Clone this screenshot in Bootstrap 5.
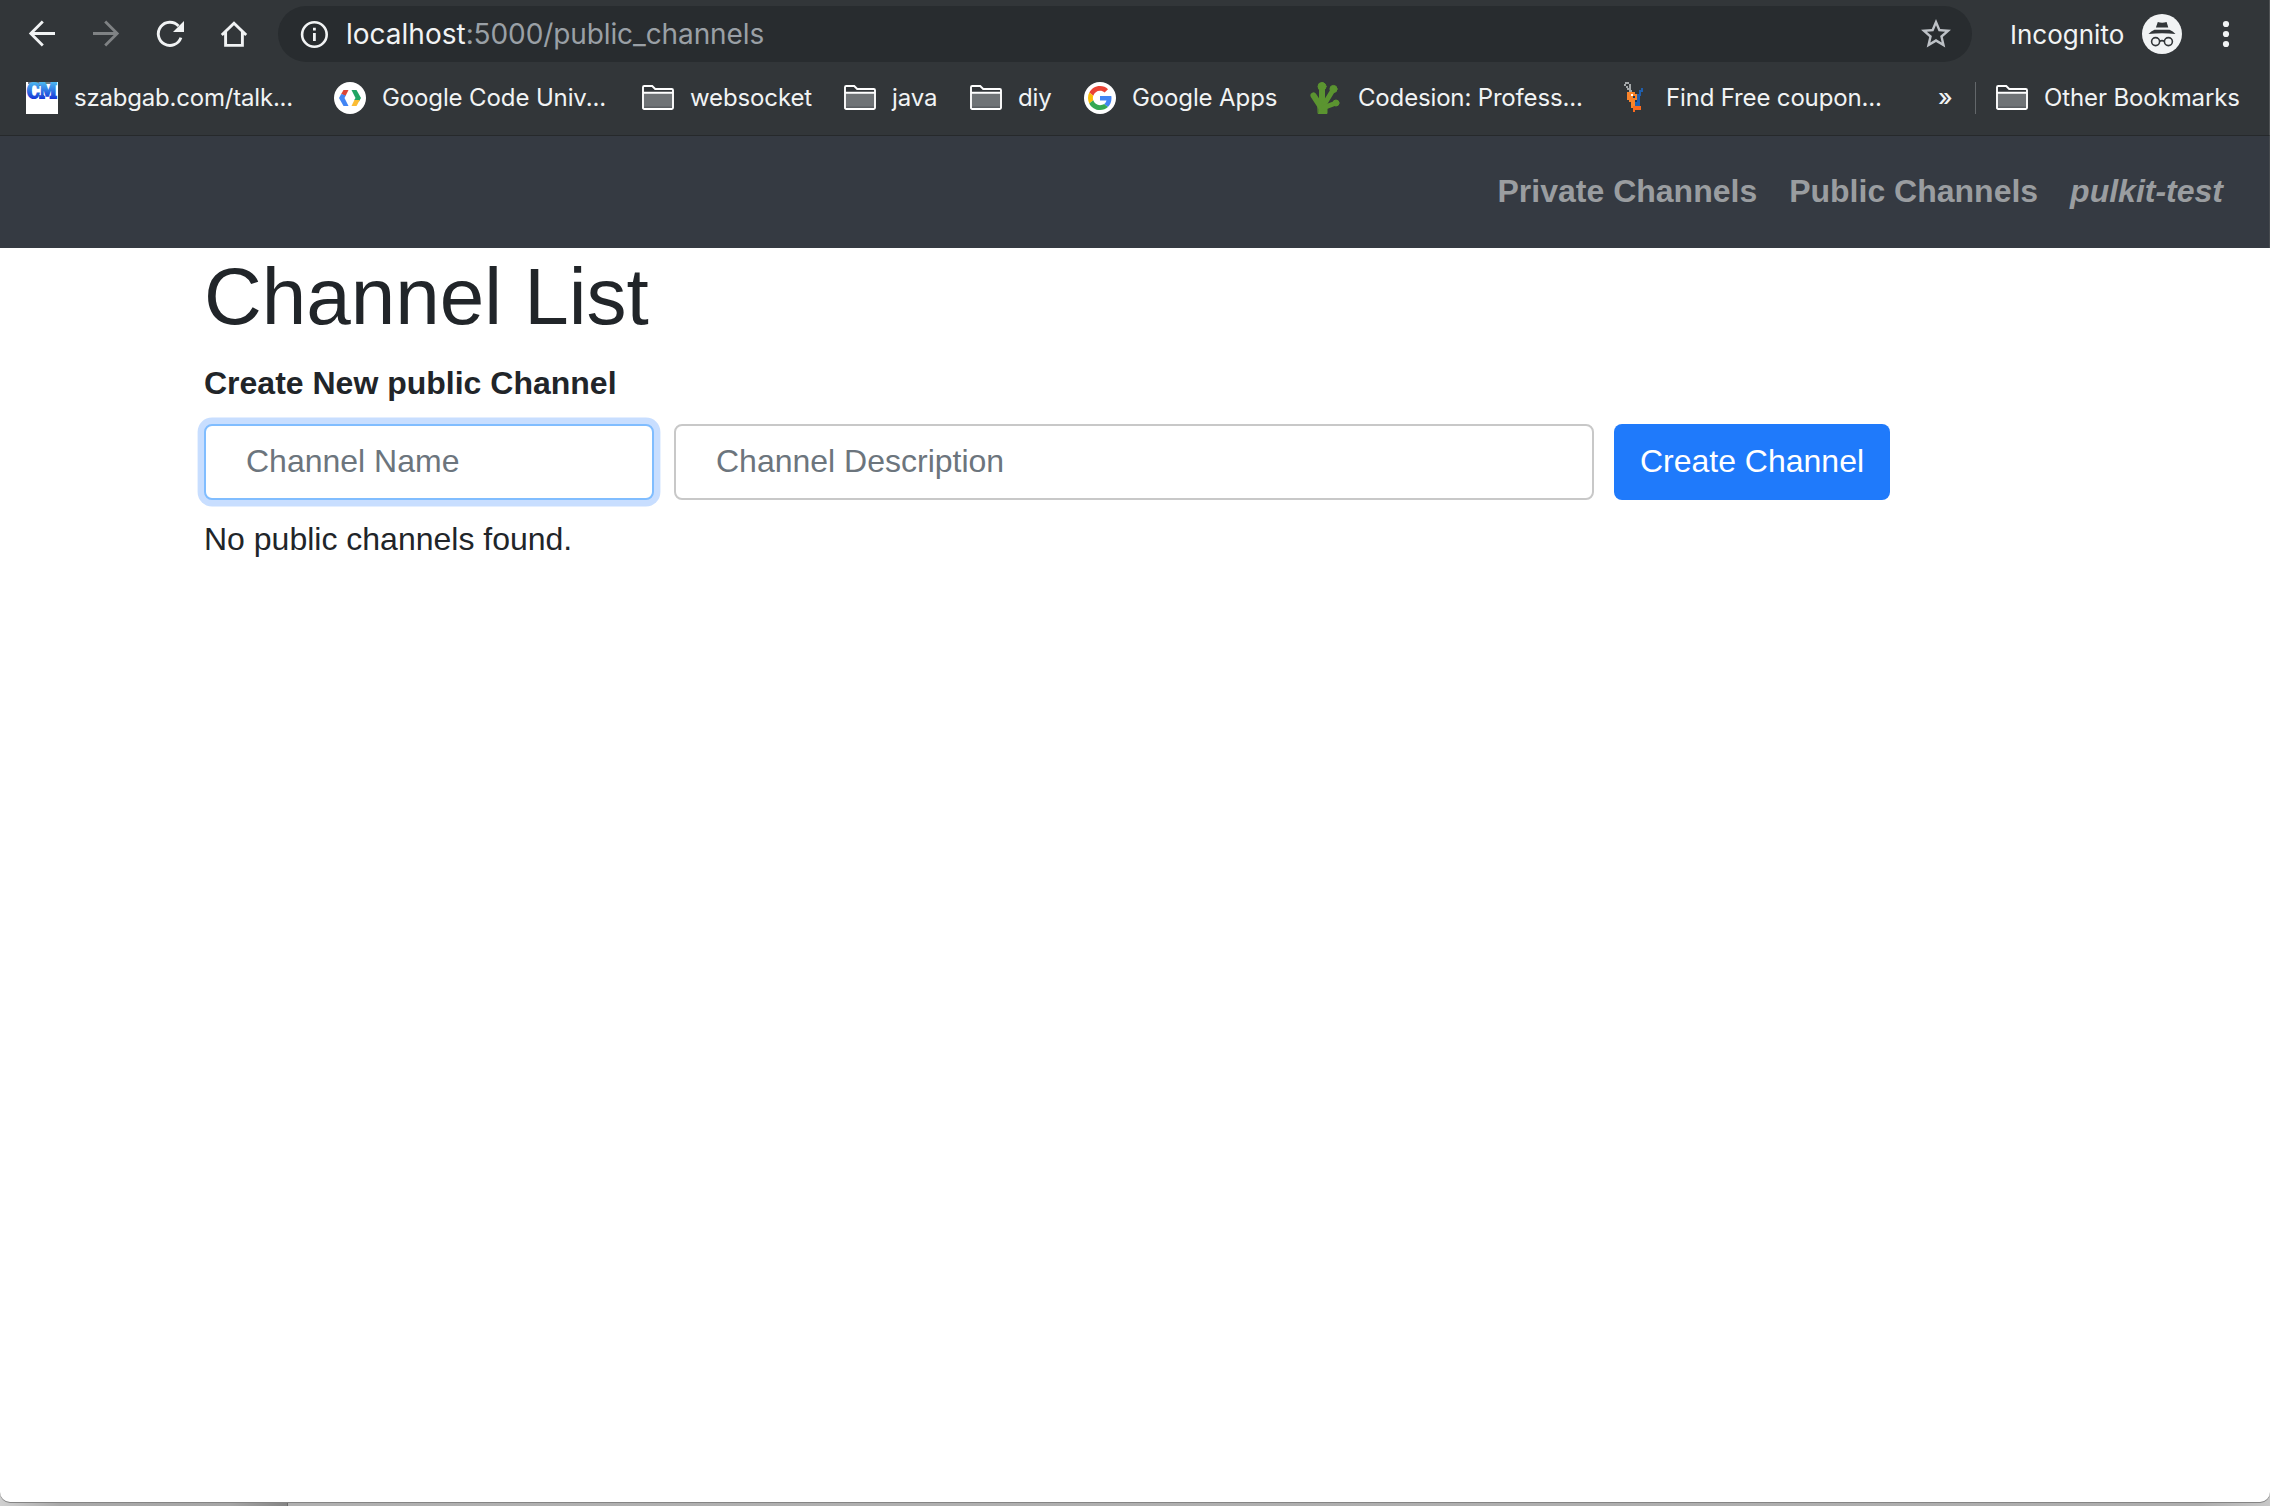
<!DOCTYPE html>
<html lang="en">
<head>
<meta charset="utf-8">
<title>Channel List</title>
<link href="https://cdn.jsdelivr.net/npm/bootstrap@5.3.0/dist/css/bootstrap.min.css" rel="stylesheet">
<script src="https://cdn.jsdelivr.net/npm/bootstrap@5.3.0/dist/js/bootstrap.bundle.min.js"></script>
<style>
body{font-family:"Liberation Sans",Arial,sans-serif;font-size:32px;line-height:48px;color:#212529;height:1506px;overflow:hidden;
  background:linear-gradient(90deg,#d0d0d0 0,#a9a9a9 60px,#a6a6a6 230px,#858585 287px,#6a6a6a 287px,#6a6a6a 288px,#b0b0b0 288px,#adadad 2200px,#c8c8c8 2270px)}
.browser-window{height:1502px;background:#fff;border-radius:0 0 10px 10px;box-shadow:0 1px 0 #858585;overflow:hidden}
.chrome-top{height:136px;background:#323639;border-bottom:1px solid #26292b;border-right:1px solid #505355;font-family:Inter,sans-serif;color:#f1f3f4}
.chrome-top svg{flex:none;display:block;overflow:visible}
.tool-row{height:68px;padding-left:26px}
.tool-icons{gap:32px}
.omnibox{margin-left:28px;width:1694px;height:56px;background:#282c2f;border-radius:28px;padding:0 18px 0 20px;font-size:28px;line-height:34px}
.omnibox .url-text{margin-left:16px}
.omnibox .url-path{color:#9aa0a6;letter-spacing:-.1px}
.incog-label{margin-left:38px;width:132px;font-size:26px;line-height:31px}
.menu-dots{margin-left:28px}
.bm-row{height:60px;font-size:24px;padding-left:26px;letter-spacing:-.12px}
.bm-item{gap:16px;flex:none;white-space:nowrap;line-height:32px}
.bm-wide{width:308px}.bm-ws{width:202px}.bm-java{width:126px}.bm-diy{width:114px}.bm-apps{width:225px}.bm-last{width:321px}
.bm-long{letter-spacing:-.2px}
.bm-shift{padding-left:1px;letter-spacing:-.16px}
.bm-more{width:37px;font-weight:500}
.bm-sep{width:1px;height:32px;background:#63676a;margin-right:20px}
.site-nav{height:112px;background:#353a42;padding:0 46px 2px;border-right:1px solid #474b50;gap:32px}
.site-nav .nav-link{color:#9a9da0;font-weight:700;padding:0}
.page-body{padding:0 204px}
.page-body h1{font-size:80px;line-height:96px;font-weight:400;margin:0 0 14px;padding-top:1px}
.create-form{gap:20px;margin-top:17px}
.create-form .form-control{height:76px;border:2px solid #c8c8c8;border-radius:8px;font-size:32px;line-height:48px;padding:11px 40px 13px;color:#495057}
.create-form .form-control::placeholder{color:#6c757d;opacity:1}
.create-form .name-field{width:450px;border-color:#80bdff;box-shadow:0 0 0 6.4px #c8deff}
.create-form .desc-field{width:920px}
.create-form .btn{width:276px;height:76px;border:0;border-radius:8px;font-size:32px;line-height:48px;padding:13px 0 15px;background:#1f7afb;white-space:nowrap}
.empty-note{margin:15px 0 0}
</style>
</head>
<body>
<svg width="0" height="0" class="position-absolute">
  <symbol id="folder" viewBox="0 0 32 32">
    <path d="M2 11H30V26H2z" fill="#6f7376"/>
    <path d="M2 24.5H30V26H2z" fill="#5b5f62"/>
    <path d="M1 25.8V5.2Q1 4 2.2 4H10.2L13.2 7H29.8Q31 7 31 8.200V25.8Q31 27 29.800 27H2.200Q1 27 1 25.800zM1 10.700H31" fill="none" stroke="#fff" stroke-width="1.900"/>
  </symbol>
</svg>
<div class="browser-window">
  <header class="chrome-top">
    <div class="tool-row d-flex align-items-center">
      <div class="tool-icons d-flex">
        <svg width="32" height="32" fill="none" stroke="#f1f3f4" stroke-width="2.800"><path d="M29 15.500H5M16.800 3.500L4.800 15.500L16.800 27.500"/></svg>
        <svg width="32" height="32" fill="none" stroke="#7f8284" stroke-width="2.800"><path d="M3 15.500H27M15.200 3.500L27.200 15.500L15.200 27.500"/></svg>
        <svg width="32" height="32"><path d="M24.500 8A11.600 11.600 0 1 0 26.900 19.600" fill="none" stroke="#f1f3f4" stroke-width="2.900"/><path d="M30 3V14H19z" fill="#f1f3f4"/></svg>
        <svg width="32" height="32" fill="none" stroke="#f1f3f4" stroke-width="2.900"><path d="M3.800 17L16 5.300L28.200 17M7.600 14V27.400H24.400V14"/></svg>
      </div>
      <div class="omnibox d-flex align-items-center">
        <svg width="32" height="32"><circle cx="16.400" cy="16.500" r="12.300" fill="none" stroke="#f1f3f4" stroke-width="2.600"/><path d="M15 9.800H17.800V12.600H15zM15 15H17.800V23H15z" fill="#f1f3f4"/></svg>
        <span class="url-text">localhost<span class="url-path">:5000/public_channels</span></span>
        <svg class="ms-auto" width="36" height="36" viewBox="0 0 24 24"><path fill="#bdc1c6" d="M22 9.240l-7.190-.620L12 2 9.190 8.630 2 9.240l5.460 4.730L5.820 21 12 17.270 18.180 21l-1.630-7.030L22 9.240zM12 15.400l-3.760 2.270 1-4.280-3.320-2.880 4.380-.380L12 6.100l1.710 4.040 4.380.380-3.320 2.880 1 4.280L12 15.400z"/></svg>
      </div>
      <span class="incog-label">Incognito</span>
      <svg width="40" height="40"><circle cx="20" cy="20" r="20" fill="#f1f3f4"/><g fill="#323639"><path d="M15.800 8Q20 9.600 24.600 8L26.300 13.600H13.900z"/><path d="M6.500 19.900Q9 17.400 12.500 15.800H27.500Q31 17.400 33.500 19.900Q20 18.700 6.500 19.900z"/></g><g fill="none" stroke="#323639" stroke-width="1.600"><circle cx="13.600" cy="27.600" r="4"/><circle cx="26.400" cy="27.600" r="4"/><path d="M17.600 27.300Q20 26 22.400 27.300"/></g></svg>
      <svg class="menu-dots" width="32" height="32" fill="#f1f3f4"><circle cx="16" cy="6" r="3.100"/><circle cx="16" cy="16" r="3.100"/><circle cx="16" cy="26" r="3.100"/></svg>
    </div>
    <div class="bm-row d-flex align-items-center">
      <div class="bm-item bm-wide d-flex">
        <svg width="32" height="32"><defs><linearGradient id="cm" gradientUnits="userSpaceOnUse" x1="0" y1="0" x2="0" y2="17"><stop offset="0" stop-color="#4cb8f0"/><stop offset="1" stop-color="#1536d8"/></linearGradient></defs><rect width="32" height="32" fill="#fff"/><path d="M2 0H30V2H2zM13 2H17V4H13zM13 13H18V17H13z" fill="#6f7c84"/><text x="1" y="16" textLength="30" lengthAdjust="spacingAndGlyphs" font-family="DejaVu Serif" font-weight="700" font-size="20" letter-spacing="0" fill="url(#cm)" stroke="url(#cm)" stroke-width="2">CM</text></svg>
        <span class="bm-long">szabgab.com/talk...</span>
      </div>
      <div class="bm-item bm-wide d-flex">
        <svg width="32" height="32"><circle cx="16" cy="16" r="16" fill="#fff"/><path d="M9.500 8H14.500L11.500 14L7.200 12z" fill="#db4437"/><path d="M7.200 12L11.800 13.400L10.500 16L14.500 24H9.500L5 16z" fill="#4285f4"/><path d="M17.500 8H22.500L27 16L25 19.500L20.200 18L21.500 16z" fill="#1fa463"/><path d="M20.400 18H25.800L22.500 24H17.500z" fill="#fbbc34"/></svg>
        <span>Google Code Univ...</span>
      </div>
      <div class="bm-item bm-ws d-flex"><svg width="32" height="32"><use href="#folder"/></svg><span>websocket</span></div>
      <div class="bm-item bm-java d-flex"><svg width="32" height="32"><use href="#folder"/></svg><span>java</span></div>
      <div class="bm-item bm-diy d-flex"><svg width="32" height="32"><use href="#folder"/></svg><span>diy</span></div>
      <div class="bm-item bm-apps d-flex">
        <svg width="32" height="32"><circle cx="16" cy="16" r="16" fill="#fff"/><g transform="translate(4 4) scale(.5)"><path fill="#EA4335" d="M24 9.500c3.540 0 6.710 1.220 9.210 3.600l6.850-6.850C35.900 2.380 30.470 0 24 0 14.620 0 6.510 5.380 2.560 13.220l7.980 6.190C12.430 13.720 17.740 9.500 24 9.500z"/><path fill="#4285F4" d="M46.980 24.550c0-1.570-.150-3.090-.380-4.550H24v9.020h12.940c-.580 2.960-2.260 5.480-4.780 7.180l7.730 6c4.510-4.180 7.090-10.360 7.090-17.650z"/><path fill="#FBBC05" d="M10.530 28.590c-.480-1.450-.760-2.990-.760-4.590s.270-3.140.760-4.590l-7.980-6.190C.920 16.460 0 20.120 0 24c0 3.880.920 7.540 2.560 10.780l7.970-6.190z"/><path fill="#34A853" d="M24 48c6.480 0 11.930-2.130 15.890-5.810l-7.730-6c-2.150 1.450-4.920 2.300-8.160 2.300-6.260 0-11.570-4.220-13.470-9.910l-7.980 6.190C6.510 42.620 14.620 48 24 48z"/></g></svg>
        <span>Google Apps</span>
      </div>
      <div class="bm-item bm-wide d-flex">
        <svg width="32" height="32" fill="#5b9430" stroke="#5b9430" stroke-linecap="round"><path d="M9.500 31.500H18V26L15 20H9z" stroke-width="1"/><path d="M13 4V24" stroke-width="6"/><circle cx="13" cy="4.500" r="4"/><path d="M4.500 13.500L12 25" stroke-width="6"/><path d="M24 8L15.500 22" stroke-width="5"/><circle cx="24.500" cy="7" r="3.600"/><path d="M27 21L15 25.500" stroke-width="5"/><circle cx="27" cy="21" r="3"/></svg>
        <span class="bm-shift">Codesion: Profess...</span>
      </div>
      <div class="bm-item bm-last d-flex">
        <svg width="32" height="32" viewBox="0 0 16 16" shape-rendering="crispEdges"><g fill="#a4a8aa"><path d="M4 0H6V1H4zM3.500 1H4.500V2H3.500zM6 1H7V3H6zM4.500 2H5.500V3H4.500zM5 3H7V4H5zM6 4H7.500V5H6z"/></g><path fill="#f9842b" d="M5 5H9V6H10V9H9V10H10V12H12V14H9V15H8V13H7V10H6V9H5z"/><path fill="#fa6a1e" d="M8 12H12V14H9V15H8z"/><path fill="#1f5fae" d="M12 3H13V5H12V7H11.500V12H9V9H10V6H11V4H12z"/><path fill="#fff" d="M7 6H8V7H7z"/><path fill="#14365f" d="M9 9H10V10H9zM8 7H9V8H8z"/></svg>
        <span class="bm-shift">Find Free coupon...</span>
      </div>
      <span class="bm-more">»</span>
      <span class="bm-sep"></span>
      <div class="bm-item d-flex"><svg width="32" height="32"><use href="#folder"/></svg><span>Other Bookmarks</span></div>
    </div>
  </header>
  <nav class="site-nav nav justify-content-end align-items-center">
    <a class="nav-link" href="#">Private Channels</a>
    <a class="nav-link" href="#">Public Channels</a>
    <a class="nav-link fst-italic" href="#">pulkit-test</a>
  </nav>
  <main class="page-body">
    <h1>Channel List</h1>
    <div class="fw-bold">Create New public Channel</div>
    <form class="create-form d-flex">
      <input class="form-control name-field" type="text" placeholder="Channel Name">
      <input class="form-control desc-field" type="text" placeholder="Channel Description">
      <button class="btn btn-primary" type="button">Create Channel</button>
    </form>
    <p class="empty-note">No public channels found.</p>
  </main>
</div>
</body>
</html>
